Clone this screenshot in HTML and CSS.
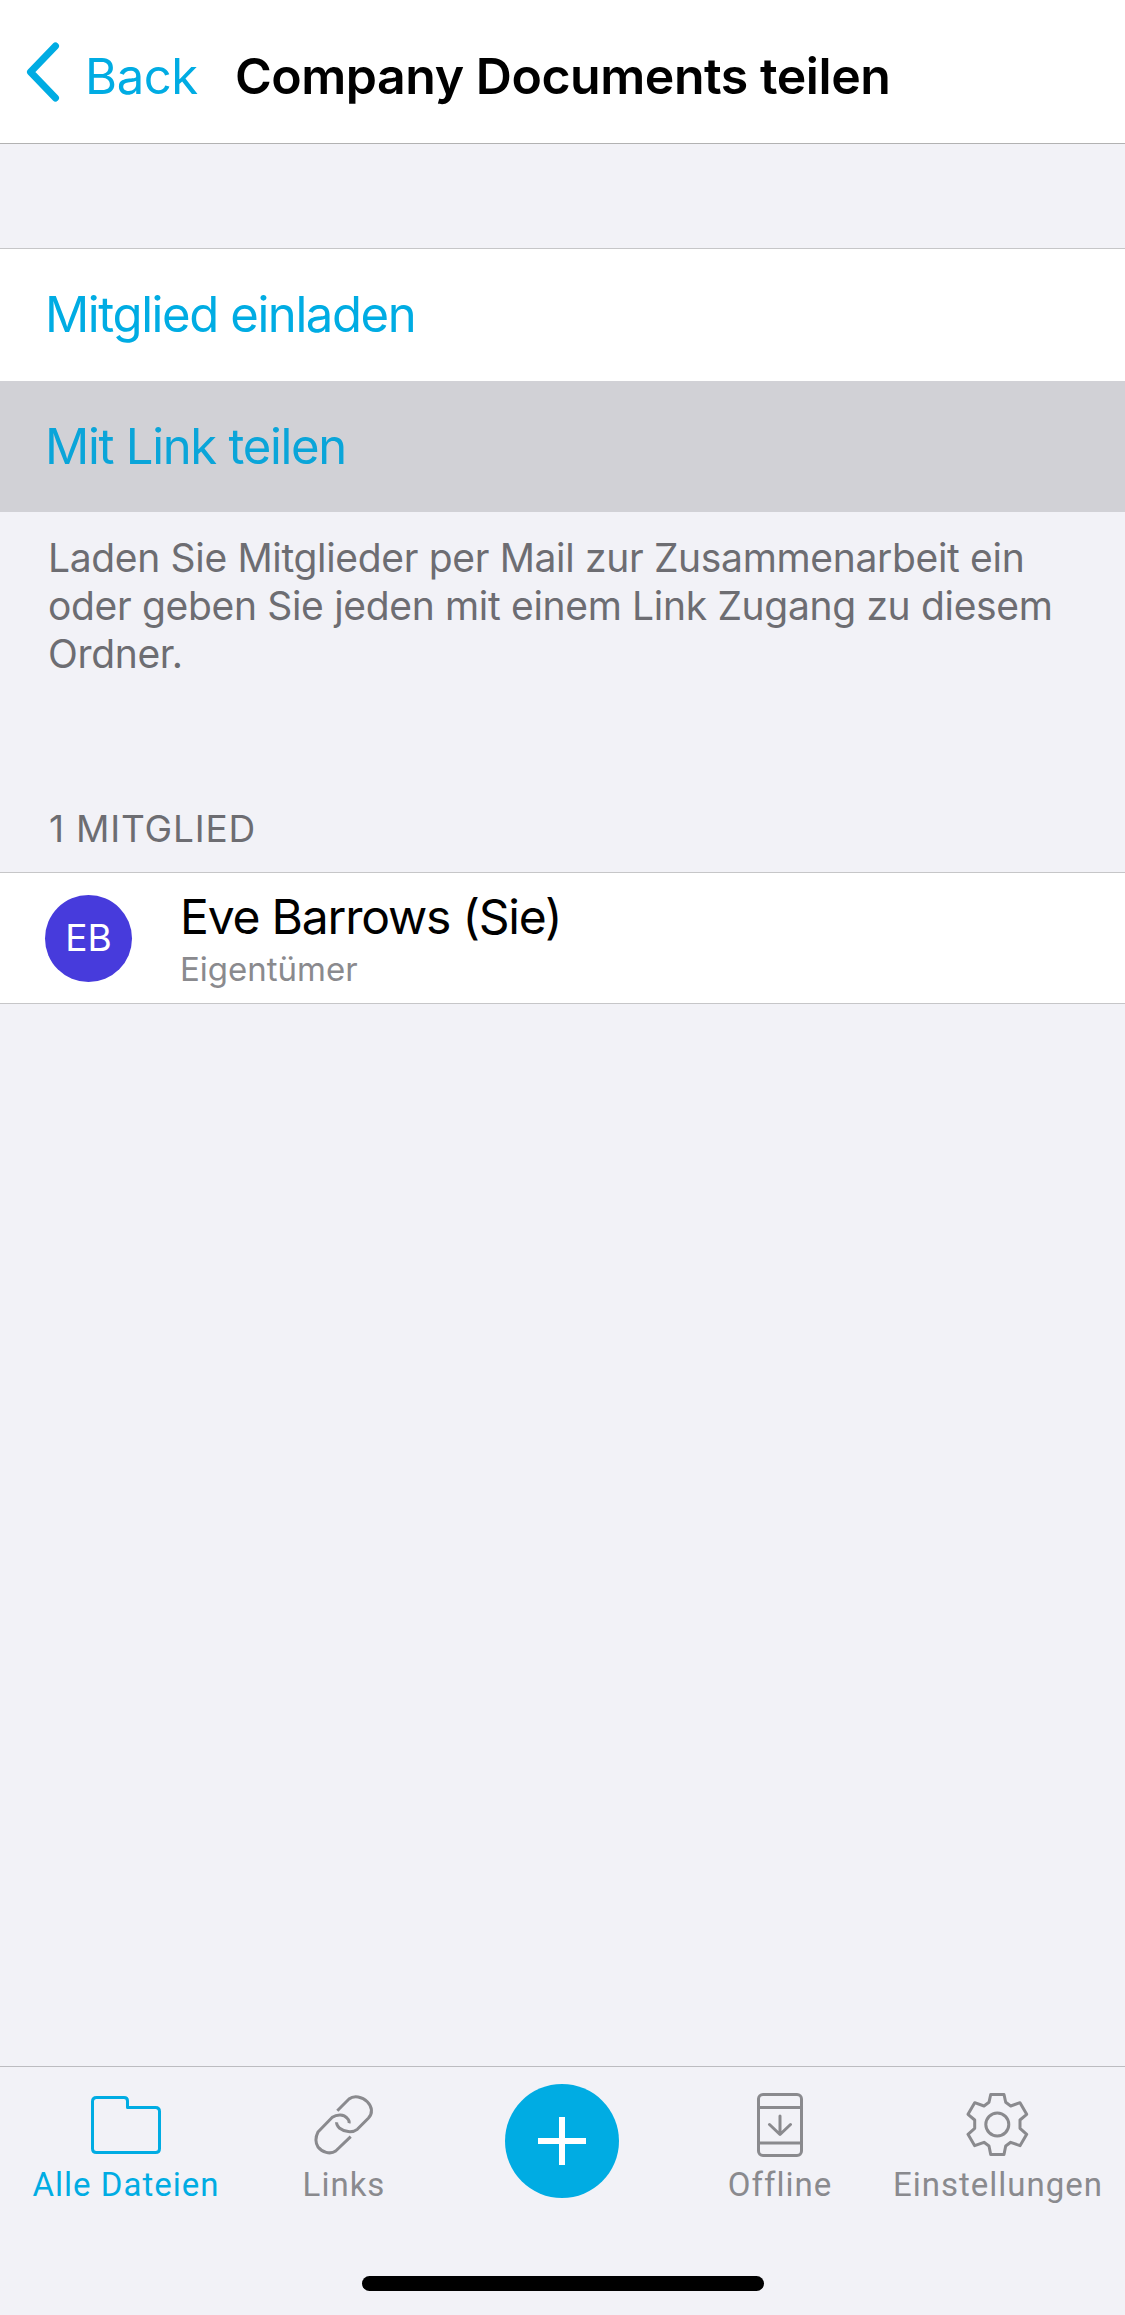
FILE: index.html
```html
<!DOCTYPE html>
<html lang="de">
<head>
<meta charset="utf-8">
<title>Company Documents teilen</title>
<link rel="stylesheet" href="styles.css">
</head>
<body>
<div class="screen">
  <header class="nav">
    <svg class="chevron" width="38" height="60" viewBox="0 0 38 60"><path d="M31.500 4 L6.500 30 L31.500 56"/></svg>
    <span class="back">Back</span>
    <h1 class="title">Company Documents teilen</h1>
  </header>
  <main class="content">
    <div class="actions">
      <div class="action">Mitglied einladen</div>
      <div class="action selected">Mit Link teilen</div>
    </div>
    <p class="note">Laden Sie Mitglieder per Mail zur Zusammenarbeit ein oder geben Sie jeden mit einem Link Zugang zu diesem Ordner.</p>
    <div class="section-head">1 MITGLIED</div>
    <div class="member">
      <div class="avatar">EB</div>
      <div class="member-text">
        <div class="name">Eve Barrows (Sie)</div>
        <div class="role">Eigentümer</div>
      </div>
    </div>
  </main>
  <nav class="tabbar">
    <div class="tabs">
      <div class="tab active">
        <svg class="icon" width="70" height="58" viewBox="0 0 70 58"><path d="M5.500 1.500 H33 Q36.500 1.500 36.500 5 V11.500 H64.500 Q68.500 11.500 68.500 15.500 V52.500 Q68.500 56.500 64.500 56.500 H5.500 Q1.500 56.500 1.500 52.500 V5.500 Q1.500 1.500 5.500 1.500 Z"/></svg>
        <span class="label">Alle Dateien</span>
      </div>
      <div class="tab">
        <svg class="icon link" width="58" height="58" viewBox="0 0 58 58"><path d="M22.300 14.700 L34 3 C39 -1 47.300 .7 52.300 5.700 C57.300 10.700 58 17.300 53.300 22.300 L42.300 33.300 C37.300 37.300 29 35.700 24.700 32.300 C22.300 30 21.300 28.300 21.700 26.300"/><path d="M35.700 40.700 L20.700 55 C15 59 7 56 3 51 C0 46 0 42 3 36 L17.300 21.300 C22 18 29 18 32 22 C34 24 34.500 26 34 27.300"/></svg>
        <span class="label">Links</span>
      </div>
      <div class="tab">
        <div class="fab"><svg width="48" height="48" viewBox="0 0 48 48"><path d="M21 0h6v21h21v6H27v21h-6V27H0v-6h21z"/></svg></div>
      </div>
      <div class="tab">
        <svg class="icon" width="46" height="64" viewBox="0 0 46 64"><rect x="1.500" y="1.500" width="43" height="61" rx="4.500"/><path d="M1.500 14.500 H44.500 M1.500 50 H44.500 M23 23 V41 M12.500 31.500 L23 41.500 L33.500 31.500"/></svg>
        <span class="label">Offline</span>
      </div>
      <div class="tab">
        <svg class="icon" width="62" height="64" viewBox="0 0 62 64"><path d="M23.700 1.500 H37 L38.700 9.300 L43.700 13 L53 9.700 L59.700 21.300 L53 27 V35.300 L59.700 41.300 L53 52.700 L43.700 49.300 L38.700 53 L37 61.500 H23.700 L22 53 L17 49.300 L7.700 52.700 L1 41.300 L7.700 35.300 V27 L1 21.300 L7.700 9.700 L17 13 L22 9.300 Z"/><circle cx="30.300" cy="31.500" r="11.500"/></svg>
        <span class="label">Einstellungen</span>
      </div>
    </div>
    <div class="home"></div>
  </nav>
</div>
</body>
</html>
```
FILE: styles.css
```css
* { box-sizing: border-box; }
html, body { margin: 0; padding: 0; }
body { font-family: "Inter", "Liberation Sans", sans-serif; background: #f2f2f7; }
.screen { width: 1125px; height: 2315px; display: flex; flex-direction: column; background: #f2f2f7; overflow: hidden; }

.nav { height: 144px; flex: none; background: #fff; border-bottom: 1px solid #b2b2b2; display: flex; align-items: center; padding: 9px 0 0 24px; }
.chevron { flex: none; fill: none; stroke: #00ace3; stroke-width: 7; stroke-linecap: round; stroke-linejoin: round; margin-top: -8px; }
.back { color: #00ace3; font-size: 49px; margin-left: 23px; letter-spacing: -.4px; }
.title { margin: 0 0 0 37px; font-size: 50px; font-weight: 600; color: #000; letter-spacing: -.45px; }

.content { flex: 1; display: flex; flex-direction: column; padding-top: 104px; }
.actions { border-top: 1px solid #c6c6c8; background: #fff; }
.action { height: 131.500px; display: flex; align-items: center; padding-left: 45px; color: #00ace3; font-size: 49px; letter-spacing: -1.400px; }
.action.selected { background: #d1d1d6; color: #0aa5d9; letter-spacing: -1.300px; }
.note { margin: 0; padding: 22px 48px 0; height: 250px; font-size: 39px; line-height: 48px; color: #6d6d72; letter-spacing: -.33px; }
.section-head { padding-left: 49px; font-size: 37px; line-height: 46px; height: 110px; padding-top: 44px; color: #6d6d72; letter-spacing: .8px; }
.member { height: 132px; background: #fff; border-top: 1px solid #c6c6c8; border-bottom: 1px solid #c6c6c8; display: flex; align-items: center; padding-left: 45px; }
.avatar { width: 87px; height: 87px; border-radius: 50%; background: #473bdc; color: #fff; display: flex; align-items: center; justify-content: center; font-size: 37px; flex: none; padding-bottom: 2px; }
.member-text { margin-left: 48px; display: flex; flex-direction: column; }
.name { font-size: 48px; line-height: 58px; color: #000; letter-spacing: -1.200px; }
.role { font-size: 33px; line-height: 40px; color: #8a8a8e; margin-top: 3px; }

.tabbar { flex: none; height: 249px; border-top: 1px solid #bcbcc0; background: #f2f2f7; display: flex; flex-direction: column; }
.tabs { display: grid; grid-template-columns: repeat(5, 218px); padding: 0 17px; height: 209px; }
.tab { display: flex; flex-direction: column; align-items: center; padding-top: 26px; color: #8a8a8e; }
.tab .icon { fill: none; stroke: #8a8a8e; stroke-width: 3; stroke-linecap: round; stroke-linejoin: round; display: block; height: 64px; overflow: visible; }
.tab .link { stroke-linecap: butt; }
.tab.active { color: #00ace3; }
.tab.active .icon { stroke: #00ace3; }
.label { font-family: "Roboto", sans-serif; font-size: 33px; line-height: 40px; margin-top: 8px; white-space: nowrap; letter-spacing: 1px; }
.fab { width: 114px; height: 114px; border-radius: 50%; background: #00ace3; display: flex; align-items: center; justify-content: center; margin-top: -9px; }
.fab path { fill: #fff; }
.home { width: 402px; height: 15px; border-radius: 8px; background: #000; align-self: center; }
```
